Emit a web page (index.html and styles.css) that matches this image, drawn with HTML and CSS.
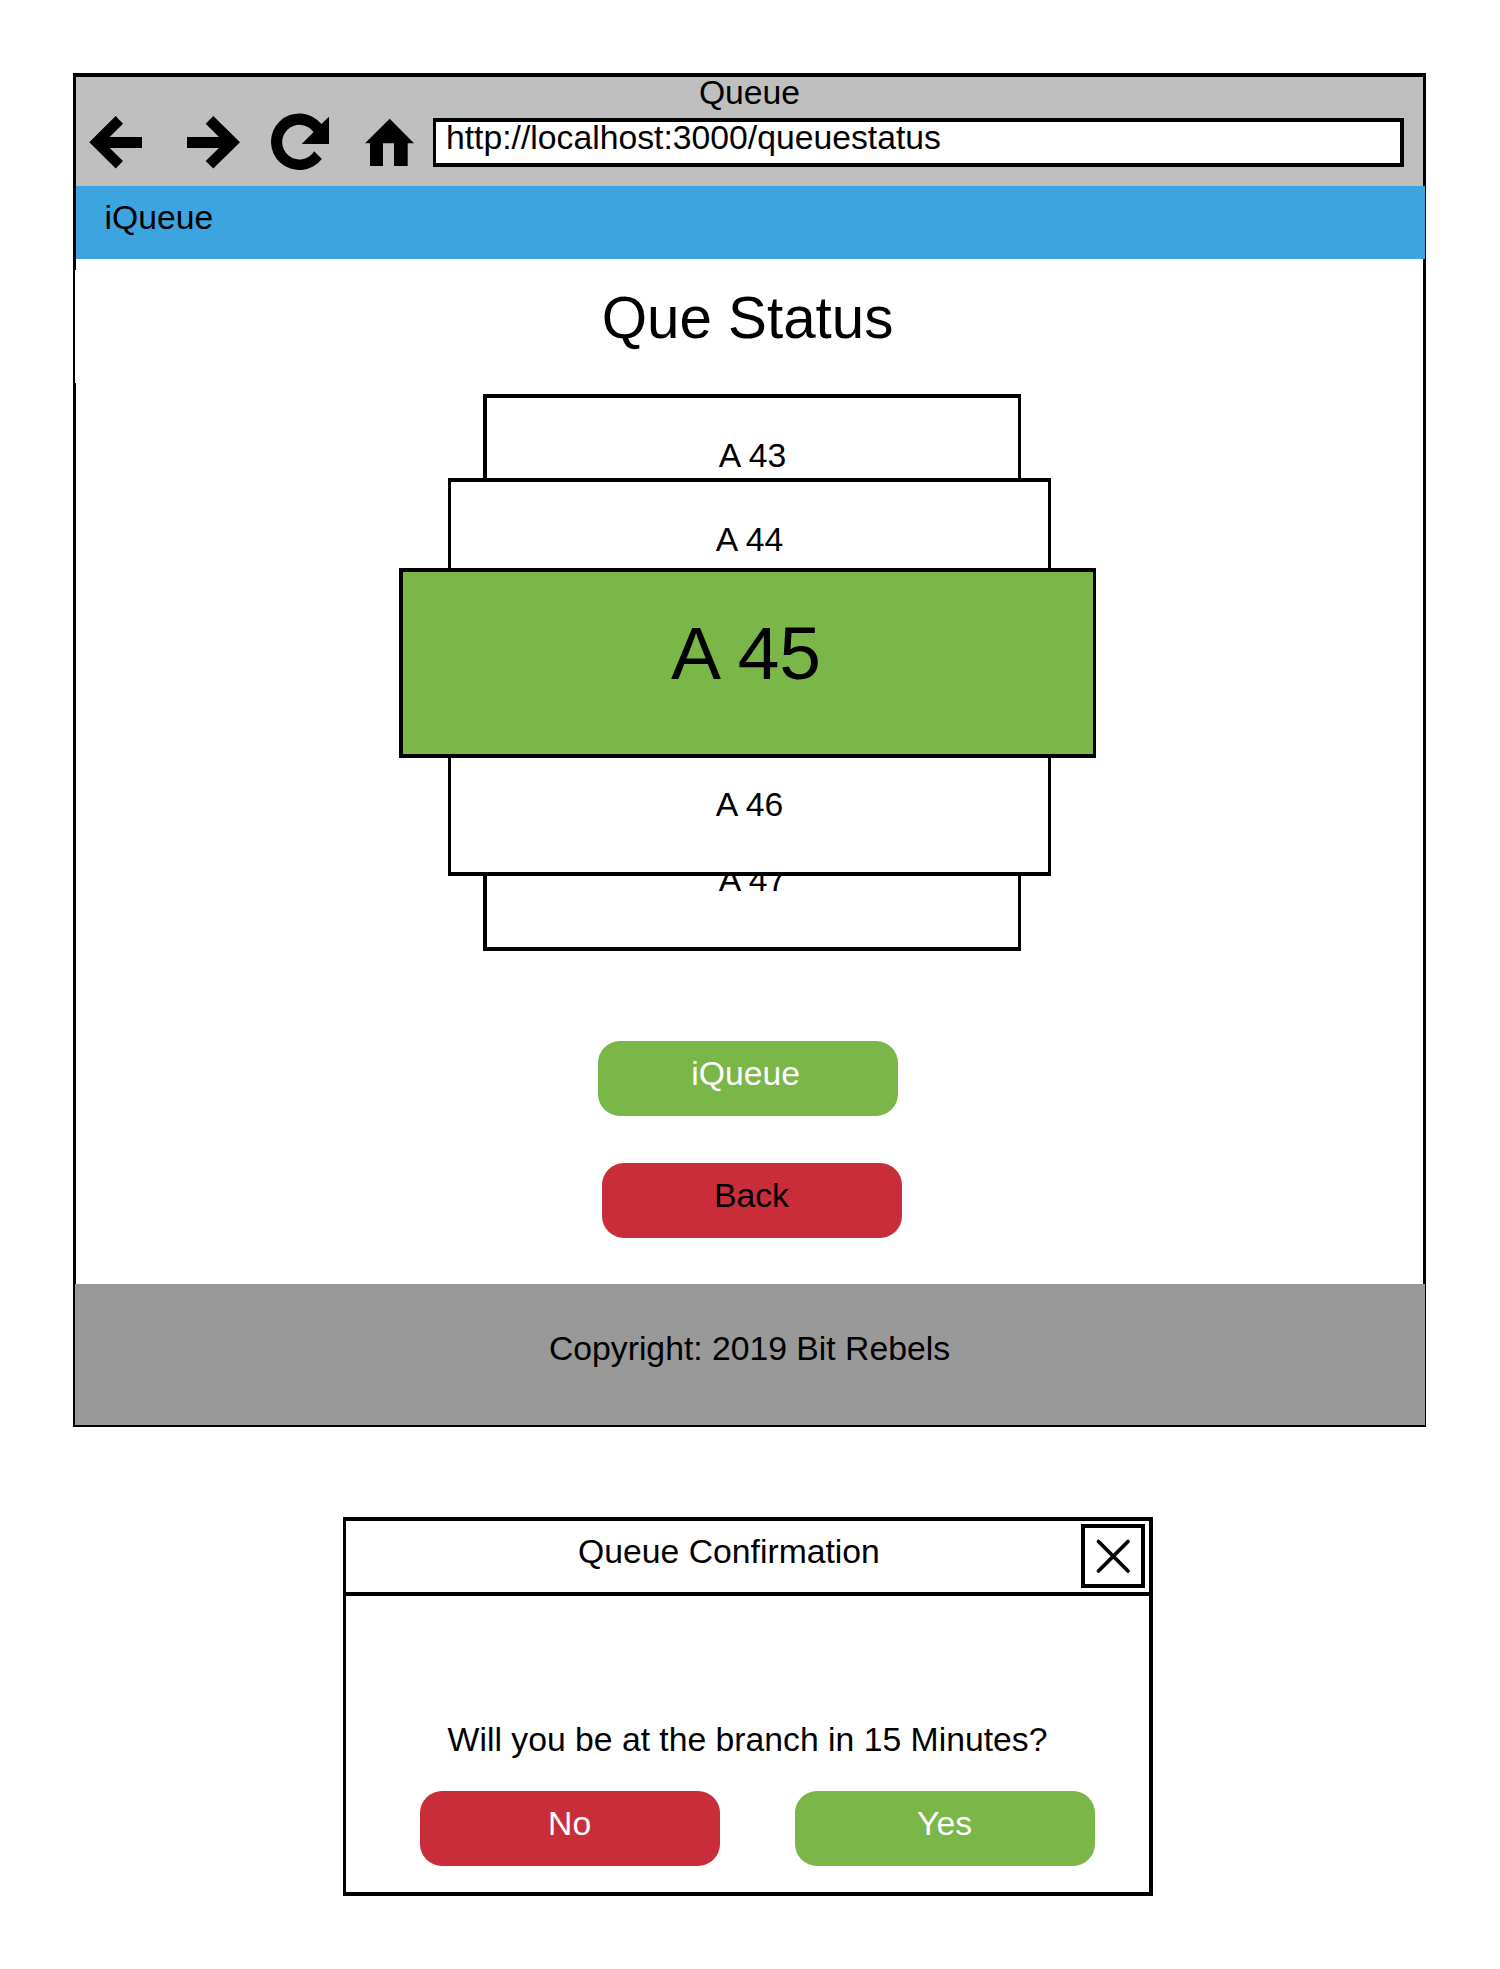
FILE: index.html
```html
<!DOCTYPE html>
<html lang="en">
<head>
<meta charset="utf-8">
<title>Queue</title>
<link rel="stylesheet" href="styles.css">
</head>
<body>
<main class="page">
  <section class="window">
    <header class="chrome">
      <div class="chrome-title">Queue</div>
      <div class="toolbar">
        <svg class="icon" width="54" height="60" viewBox="89 112 54 60"><path d="M89.3 142.3 115.7 116 123 123.7 109.7 137H142V148H109.7L123 161 115.7 168.6Z"/></svg>
        <svg class="icon icon-forward" width="54" height="60" viewBox="187 112 54 60"><path d="M240 142.3 213.3 116 205.7 123.7 219 137H187V148H219L205.7 161 213.3 168.6Z"/></svg>
        <svg class="icon icon-reload" width="60" height="60" viewBox="270 112 60 60"><path d="M321.8 158.9A28.3 28.3 0 1 1 321.4 124.1L329 116.8V144H301.7L313.6 132.1A17.3 17.3 0 1 0 314.2 151.2Z"/></svg>
        <svg class="icon icon-home" width="50" height="60" viewBox="365 112 50 60"><path d="M389.7 118.7 414 143.2H407.7V166H394V143.2H383V166H370V143.2H365Z"/></svg>
        <div class="address">http://localhost:3000/queuestatus</div>
      </div>
    </header>
    <nav class="navbar">iQueue</nav>
    <h1 class="heading">Que Status</h1>
    <div class="queue">
      <div class="ticket outer first">A 43</div>
      <div class="ticket inner second">A 44</div>
      <div class="ticket current">A 45</div>
      <div class="ticket inner fourth">A 46</div>
      <div class="ticket outer last">A 47</div>
    </div>
    <div class="actions">
      <button class="btn green join">iQueue</button>
      <button class="btn red back">Back</button>
    </div>
    <footer class="footer">Copyright: 2019 Bit Rebels</footer>
  </section>

  <section class="dialog">
    <header class="dialog-head">
      <div class="dialog-title">Queue Confirmation</div>
      <button class="close" aria-label="Close"><svg width="56" height="56" viewBox="0 0 56 56"><path d="M13.5 13.5 43 43M43 13.5 13.5 43"/></svg></button>
    </header>
    <p class="question">Will you be at the branch in 15 Minutes?</p>
    <div class="choices">
      <button class="btn red">No</button>
      <button class="btn green">Yes</button>
    </div>
  </section>
</main>
</body>
</html>
```

FILE: styles.css
```css
* { box-sizing: border-box; }

body {
  margin: 0;
  background: #fff;
  color: #000;
  font: 33.72px/40px "Liberation Sans", Arial, sans-serif;
}

.page { height: 1969px; padding-top: 73px; overflow: hidden; }

/* Browser window */
.window {
  width: 1353px;
  height: 1354px;
  margin-left: 73px;
  border: solid #000;
  border-width: 4px 3px 2px;
}

.chrome { height: 109px; background: #bfbfbf; }
.chrome-title { height: 35px; line-height: 30px; text-align: center; }

.toolbar { display: flex; padding: 0 19px 0 13px; }
.icon { display: block; flex: none; }
.icon-forward { margin-left: 44px; }
.icon-reload { margin-left: 29px; }
.icon-home { margin-left: 35px; }

.address {
  width: 971px;
  height: 49px;
  margin: 6px 0 0 18px;
  padding-left: 10px;
  border: 4px solid #000;
  border-left-width: 3px;
  background: #fff;
  line-height: 30px;
}

.navbar {
  height: 73px;
  margin-right: -2px;
  padding: 11px 28.5px;
  background: #3ca5df;
}

.heading {
  height: 113px;
  margin: 11px 0 0 -1px;
  padding: 15px 3px 0 0;
  background: #fff;
  font-size: 58.3px;
  font-weight: 400;
  line-height: 65px;
  text-align: center;
}

/* Carousel of ticket numbers */
.queue { margin-top: 11px; }
.ticket {
  position: relative;
  border: 0 solid #000;
  background: #fff;
  text-align: center;
}
.outer { width: 538px; margin-left: 407px; border-left-width: 4px; border-right-width: 3px; }
.inner { width: 603px; margin-left: 372px; border-left-width: 3px; border-right-width: 3px; }
.first { height: 84px; padding-top: 37px; border-top-width: 4px; }
.second { height: 90px; padding-top: 37px; border-top-width: 4px; }
.current {
  width: 697px;
  height: 190px;
  margin-left: 323px;
  padding: 39px 4px 0 0;
  border-width: 4px 3px 4px 4px;
  background: #7ab648;
  font-size: 75px;
  line-height: 84px;
}
.fourth { z-index: 1; height: 118px; padding-top: 26px; border-bottom-width: 4px; }
.last { height: 125px; margin-top: -50px; padding-top: 33px; border-bottom-width: 4px; }

.btn {
  display: block;
  width: 300px;
  height: 75px;
  padding: 0 0 11px;
  border: 0;
  border-radius: 22px;
  color: #fff;
  font: inherit;
  text-align: center;
}
.green { background: #7ab648; }
.red { background: #c92d39; }

.actions { height: 333px; padding-top: 89.6px; }
.join { margin-left: 521.7px; padding-right: 4px; }
.back { margin: 47px 0 0 525.5px; color: #000; }

.footer {
  height: 141px;
  margin: 0 -2px 0 -1px;
  padding: 44px 1px 0 0;
  background: #999;
  text-align: center;
}

/* Confirmation dialog */
.dialog {
  width: 810px;
  height: 379px;
  margin: 90px 0 0 343px;
  border: 4px solid #000;
  border-left-width: 3px;
}
.dialog-head {
  display: flex;
  height: 75px;
  padding: 3px 4px 0 31px;
  border-bottom: 4px solid #000;
}
.dialog-title { flex: 1; padding-top: 7px; text-align: center; }
.close {
  width: 64px;
  height: 64px;
  padding: 0;
  border: 4px solid #000;
  background: #fff;
}
.close svg { display: block; }
.close path { fill: none; stroke: #000; stroke-width: 3.8; stroke-linecap: round; }

.question { margin: 123px 0 0; text-align: center; }
.choices { display: flex; gap: 75px; padding: 31.7px 0 0 73.6px; }
```
